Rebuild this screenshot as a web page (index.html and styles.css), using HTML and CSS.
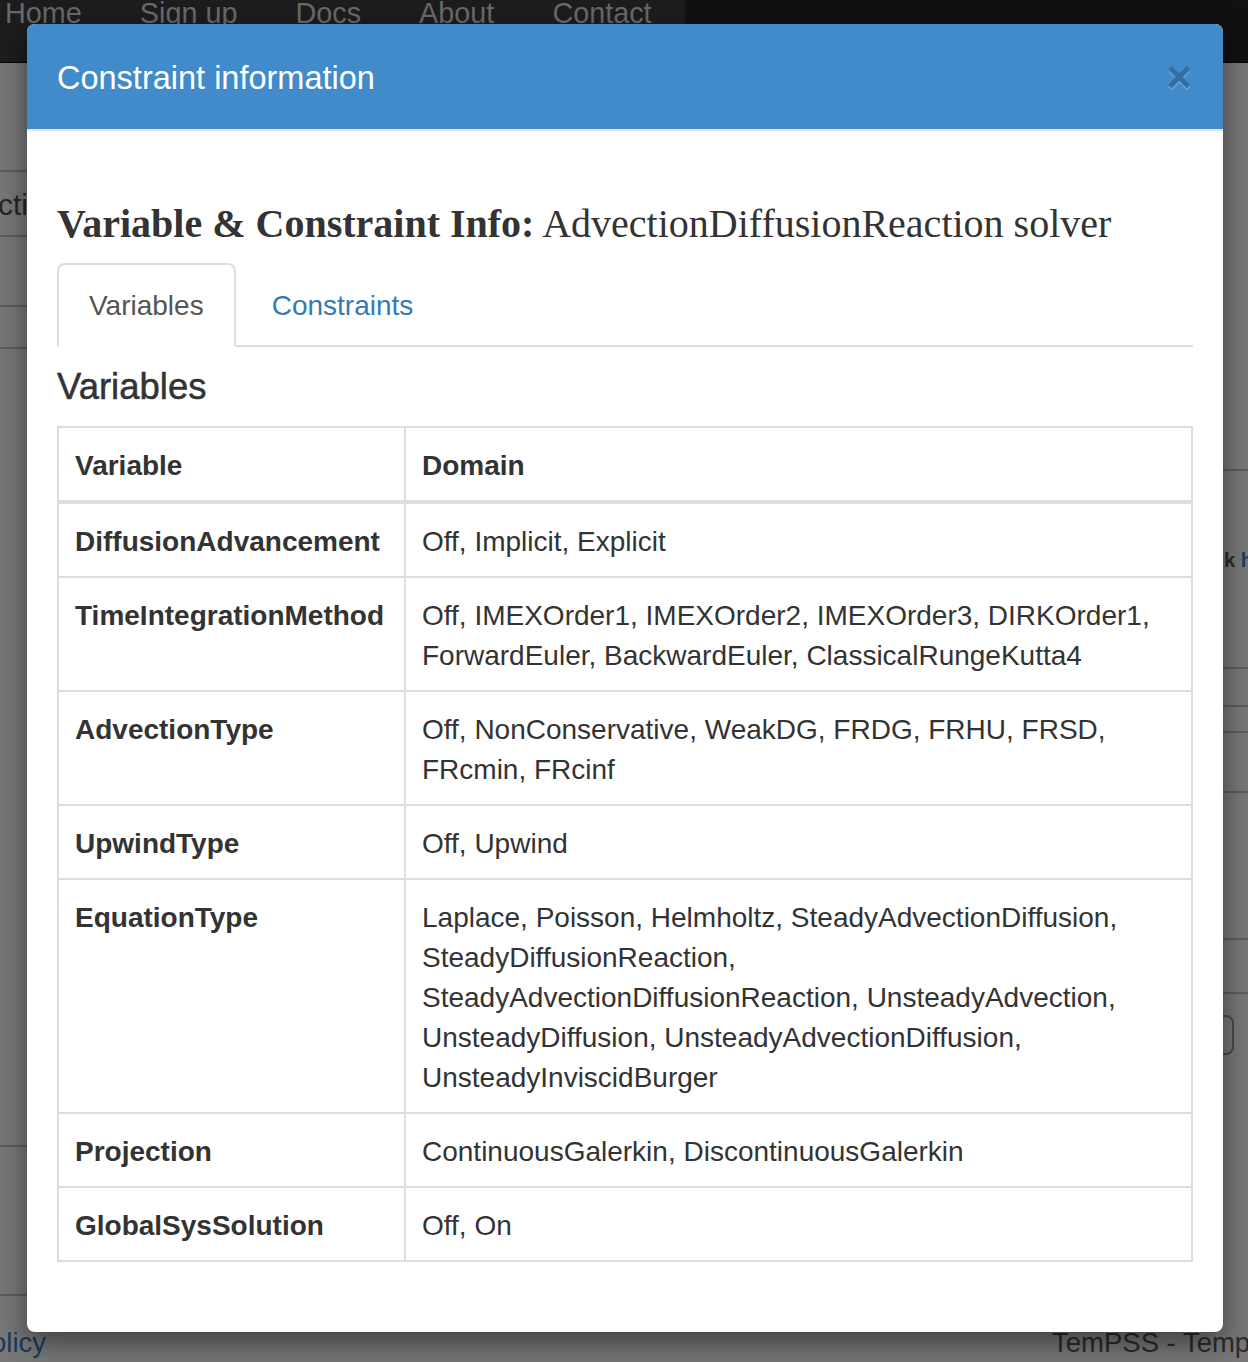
FILE: index.html
```html
<!DOCTYPE html>
<html lang="en">
<head>
<meta charset="utf-8">
<title>Constraint information</title>
<link rel="stylesheet" href="styles.css">
</head>
<body>
<div class="page">
  <header class="navbar">
    <ul class="nav">
      <li>Home</li>
      <li>Sign up</li>
      <li>Docs</li>
      <li>About</li>
      <li>Contact</li>
    </ul>
  </header>
  <div class="bg-body">
    <div class="bg-left">
      <div class="bg-row h107"></div>
      <div class="bg-row h65 bg-text-left"><span class="cti">cti</span></div>
      <div class="bg-row h68"></div>
      <div class="bg-row h40"></div>
      <div class="bg-row h796"></div>
      <div class="bg-row h147"></div>
    </div>
    <div class="bg-right">
      <div class="bg-row h406"></div>
      <div class="bg-row h198 bg-text-right"><span class="kk">k</span> <span class="hh">h</span></div>
      <div class="bg-row h36"></div>
      <div class="bg-row h24"></div>
      <div class="bg-row h58"></div>
      <div class="bg-row h145"></div>
      <div class="bg-row h52"></div>
      <div class="bg-input-wrap"><div class="bg-input"></div></div>
    </div>
  </div>
  <footer class="bg-footer">
    <span class="policy">olicy</span>
    <span class="tempss">TemPSS - Template Parameter System</span>
  </footer>
</div>

<div class="modal">
  <div class="modal-header">
    <h4 class="modal-title">Constraint information</h4>
    <span class="close">&times;</span>
  </div>
  <div class="modal-body">
    <h3 class="info-title"><strong>Variable &amp; Constraint Info:</strong> AdvectionDiffusionReaction solver</h3>
    <ul class="tabs">
      <li class="tab active">Variables</li>
      <li class="tab">Constraints</li>
    </ul>
    <h4 class="section-title">Variables</h4>
    <table class="var-table">
      <colgroup><col class="col-var"><col></colgroup>
      <thead>
        <tr><th>Variable</th><th>Domain</th></tr>
      </thead>
      <tbody>
        <tr><th>DiffusionAdvancement</th><td>Off, Implicit, Explicit</td></tr>
        <tr><th>TimeIntegrationMethod</th><td>Off, IMEXOrder1, IMEXOrder2, IMEXOrder3, DIRKOrder1, ForwardEuler, BackwardEuler, ClassicalRungeKutta4</td></tr>
        <tr><th>AdvectionType</th><td>Off, NonConservative, WeakDG, FRDG, FRHU, FRSD, FRcmin, FRcinf</td></tr>
        <tr><th>UpwindType</th><td>Off, Upwind</td></tr>
        <tr><th>EquationType</th><td>Laplace, Poisson, Helmholtz, SteadyAdvectionDiffusion, SteadyDiffusionReaction, SteadyAdvectionDiffusionReaction, UnsteadyAdvection, UnsteadyDiffusion, UnsteadyAdvectionDiffusion, UnsteadyInviscidBurger</td></tr>
        <tr><th>Projection</th><td>ContinuousGalerkin, DiscontinuousGalerkin</td></tr>
        <tr><th>GlobalSysSolution</th><td>Off, On</td></tr>
      </tbody>
    </table>
  </div>
</div>
</body>
</html>
```

FILE: styles.css
```css
html, body {
  margin: 0;
  padding: 0;
}
body {
  width: 1248px;
  height: 1362px;
  overflow: hidden;
  background: #787878;
  font-family: "Liberation Sans", Arial, Helvetica, sans-serif;
  color: #333;
  position: relative;
}

/* ---------- dimmed background page ---------- */
.page {
  display: flex;
  flex-direction: column;
  height: 1362px;
}
.navbar {
  height: 62px;
  background: #111;
  border-bottom: 1px solid #050505;
  display: flex;
}
.nav {
  list-style: none;
  margin: 0;
  padding: 0 30px 0 5px;
  width: 650px;
  background: #1d1d1d;
  display: flex;
  gap: 58px;
  font-size: 28.8px;
  line-height: 28px;
  color: #6a6a6a;
  white-space: nowrap;
}
.nav li {
  margin-top: -1px;
  flex: none;
}
.bg-body {
  height: 1235px;
  display: flex;
  justify-content: space-between;
}
.bg-left {
  width: 27px;
  display: flex;
  flex-direction: column;
}
.bg-right {
  width: 25px;
  display: flex;
  flex-direction: column;
}
.bg-row {
  border-bottom: 2px solid #5e5e5e;
  flex: none;
  overflow: hidden;
  white-space: nowrap;
}
.h107 { height: 107px; }
.h65 { height: 65px; }
.h68 { height: 68px; }
.h40 { height: 40px; }
.h796 { height: 796px; }
.h147 { height: 147px; }
.h406 { height: 406px; }
.h198 { height: 198px; }
.h36 { height: 36px; }
.h24 { height: 24px; }
.h58 { height: 58px; }
.h145 { height: 145px; }
.h52 { height: 52px; }

.bg-text-left {
  box-sizing: border-box;
  padding-top: 18px;
  font-size: 30px;
  line-height: 30px;
}
.cti {
  color: #262626;
  margin-left: -2px;
}
.bg-text-right {
  box-sizing: border-box;
  padding-top: 79px;
  font-size: 20px;
  line-height: 20px;
  font-weight: bold;
}
.kk { color: #2a2a2a; margin-left: 1px; }
.hh { color: #1d3c5e; }
.bg-input-wrap {
  padding-top: 21px;
  margin-left: -20px;
}
.bg-input {
  width: 27px;
  height: 36px;
  border: 2px solid #4c4c4c;
  border-radius: 8px;
}
.bg-footer {
  flex: 1;
  display: flex;
  justify-content: space-between;
  padding-top: 32px;
  font-size: 27.5px;
  line-height: 26px;
  white-space: nowrap;
  overflow: hidden;
}
.policy {
  color: #1b3a5c;
  margin-left: -9px;
}
.tempss {
  color: #2b2b2b;
  margin-left: auto;
  width: 196px;
  overflow: hidden;
}

/* ---------- modal ---------- */
.modal {
  position: absolute;
  left: 27px;
  top: 24px;
  width: 1196px;
  background: #fff;
  border-radius: 8px;
  box-shadow: 0 10px 30px rgba(0, 0, 0, 0.5);
  overflow: hidden;
}
.modal-header {
  box-sizing: border-box;
  padding: 0 30px;
  background: #428bca;
  border-bottom: 2px solid #e5e5e5;
  height: 107px;
  display: flex;
  align-items: center;
  justify-content: space-between;
}
.modal-title {
  margin: 2px 0 0 0;
  font-size: 32.5px;
  font-weight: normal;
  color: #fff;
  line-height: 40px;
}
.close {
  font-size: 44px;
  font-weight: bold;
  line-height: 40px;
  color: #000;
  opacity: 0.2;
  text-shadow: 0 2px 0 #fff;
  margin-right: 1px;
}
.modal-body {
  padding: 30px;
}
.info-title {
  margin: 40px 0 16px 0;
  font-family: "Liberation Serif", "Times New Roman", serif;
  font-size: 40px;
  font-weight: normal;
  line-height: 46px;
  color: #333;
  white-space: nowrap;
}
.info-title strong {
  font-weight: bold;
}
.tabs {
  list-style: none;
  margin: 0;
  padding: 0;
  display: flex;
  border-bottom: 2px solid #ddd;
  font-size: 28px;
  line-height: 40px;
}
.tab {
  padding: 21px 30px 19px 30px;
  margin-right: 4px;
  margin-bottom: -2px;
  border: 2px solid transparent;
  border-radius: 8px 8px 0 0;
  color: #337ab7;
}
.tab.active {
  color: #555;
  background: #fff;
  border-color: #ddd;
  border-bottom-color: transparent;
}
.section-title {
  margin: 20px 0 19px 0;
  font-size: 36.5px;
  font-weight: normal;
  -webkit-text-stroke: 0.5px #333;
  line-height: 40px;
  color: #333;
}
.var-table {
  width: 100%;
  border-collapse: collapse;
  table-layout: fixed;
  border: 2px solid #ddd;
  margin-bottom: 40px;
  font-size: 28px;
  line-height: 40px;
}
.col-var {
  width: 347px;
}
.var-table th,
.var-table td {
  border: 2px solid #ddd;
  padding: 18px 16px 14px 16px;
  text-align: left;
  vertical-align: top;
}
.var-table th {
  font-weight: bold;
  white-space: nowrap;
}
.var-table thead th {
  border-bottom-width: 4px;
}
```
